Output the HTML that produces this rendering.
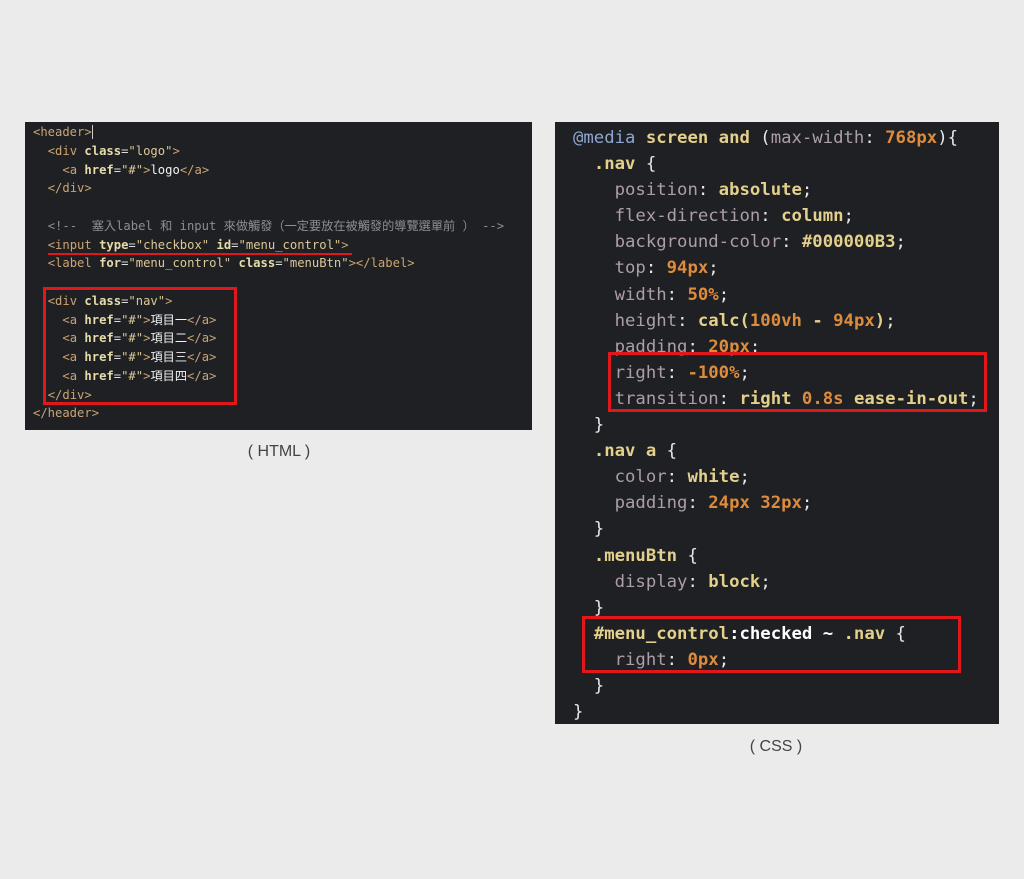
<!DOCTYPE html>
<html><head><meta charset="utf-8"><style>
body{margin:0;width:1024px;height:879px;background:#ebebeb;position:relative;overflow:hidden}
.p{position:absolute;background:#1f2024;margin:0;white-space:pre;font-family:"DejaVu Sans Mono","Noto Sans CJK TC",monospace}
#h{left:25px;top:122px;width:507px;height:308px;font-size:12.2px;line-height:18.75px;padding-left:8px;padding-top:1px;box-sizing:border-box;color:#ddd}
#c{left:555px;top:122px;width:444px;height:602px;font-size:17.3px;line-height:26.1px;padding-left:18px;padding-top:3px;box-sizing:border-box;color:#e8e8e8}
.t{color:#caa472}.a{color:#e6dca8;font-weight:bold}.s{color:#dcc896}.cm{color:#8d8d94}.w{color:#f2f2f2}
.pr{color:#ad9dab}.v{color:#e3d08a;font-weight:bold}.n{color:#de8c3c;font-weight:bold}.sel{color:#e3d08a;font-weight:bold}.m{color:#8fa6cf}.k{color:#fff;font-weight:bold}
.box{position:absolute;border:3px solid #e0181c;box-sizing:border-box}
.cap{position:absolute;font-family:"Liberation Sans",sans-serif;font-size:16px;color:#444;transform:translateX(-50%)}
</style></head><body>
<pre class="p" id="h"><span class="t">&lt;header&gt;</span><span style="border-left:1px solid #ccc"></span>
  <span class="t">&lt;div</span> <span class="a">class</span>=<span class="s">"logo"</span><span class="t">&gt;</span>
    <span class="t">&lt;a</span> <span class="a">href</span>=<span class="s">"#"</span><span class="t">&gt;</span><span class="w">logo</span><span class="t">&lt;/a&gt;</span>
  <span class="t">&lt;/div&gt;</span>

  <span class="cm">&lt;!--  塞入label 和 input 來做觸發（一定要放在被觸發的導覽選單前 ） --&gt;</span>
  <span class="t">&lt;input</span> <span class="a">type</span>=<span class="s">"checkbox"</span> <span class="a">id</span>=<span class="s">"menu_control"</span><span class="t">&gt;</span>
  <span class="t">&lt;label</span> <span class="a">for</span>=<span class="s">"menu_control"</span> <span class="a">class</span>=<span class="s">"menuBtn"</span><span class="t">&gt;&lt;/label&gt;</span>

  <span class="t">&lt;div</span> <span class="a">class</span>=<span class="s">"nav"</span><span class="t">&gt;</span>
    <span class="t">&lt;a</span> <span class="a">href</span>=<span class="s">"#"</span><span class="t">&gt;</span><span class="w">項目一</span><span class="t">&lt;/a&gt;</span>
    <span class="t">&lt;a</span> <span class="a">href</span>=<span class="s">"#"</span><span class="t">&gt;</span><span class="w">項目二</span><span class="t">&lt;/a&gt;</span>
    <span class="t">&lt;a</span> <span class="a">href</span>=<span class="s">"#"</span><span class="t">&gt;</span><span class="w">項目三</span><span class="t">&lt;/a&gt;</span>
    <span class="t">&lt;a</span> <span class="a">href</span>=<span class="s">"#"</span><span class="t">&gt;</span><span class="w">項目四</span><span class="t">&lt;/a&gt;</span>
  <span class="t">&lt;/div&gt;</span>
<span class="t">&lt;/header&gt;</span></pre>
<div style="position:absolute;left:48px;top:253px;width:304px;height:2px;background:#e0181c"></div>
<div class="box" style="left:43px;top:287px;width:194px;height:118px"></div>
<pre class="p" id="c"><span class="m">@media</span> <span class="sel">screen and</span> (<span class="pr">max-width</span>: <span class="n">768px</span>){
  <span class="sel">.nav</span> {
    <span class="pr">position</span>: <span class="v">absolute</span>;
    <span class="pr">flex-direction</span>: <span class="v">column</span>;
    <span class="pr">background-color</span>: <span class="v">#000000B3</span>;
    <span class="pr">top</span>: <span class="n">94px</span>;
    <span class="pr">width</span>: <span class="n">50%</span>;
    <span class="pr">height</span>: <span class="v">calc(</span><span class="n">100vh</span> <span class="v">-</span> <span class="n">94px</span><span class="v">)</span>;
    <span class="pr">padding</span>: <span class="n">20px</span>;
    <span class="pr">right</span>: <span class="n">-100%</span>;
    <span class="pr">transition</span>: <span class="v">right</span> <span class="n">0.8s</span> <span class="v">ease-in-out</span>;
  }
  <span class="sel">.nav a</span> {
    <span class="pr">color</span>: <span class="v">white</span>;
    <span class="pr">padding</span>: <span class="n">24px 32px</span>;
  }
  <span class="sel">.menuBtn</span> {
    <span class="pr">display</span>: <span class="v">block</span>;
  }
  <span class="sel">#menu_control</span><span class="k">:checked ~</span> <span class="sel">.nav</span> {
    <span class="pr">right</span>: <span class="n">0px</span>;
  }
}</pre>
<div class="box" style="left:608px;top:352px;width:379px;height:60px"></div>
<div class="box" style="left:582px;top:616px;width:379px;height:57px"></div>
<div class="cap" style="left:279px;top:443px">( HTML )</div>
<div class="cap" style="left:776px;top:738px">( CSS )</div>
</body></html>
